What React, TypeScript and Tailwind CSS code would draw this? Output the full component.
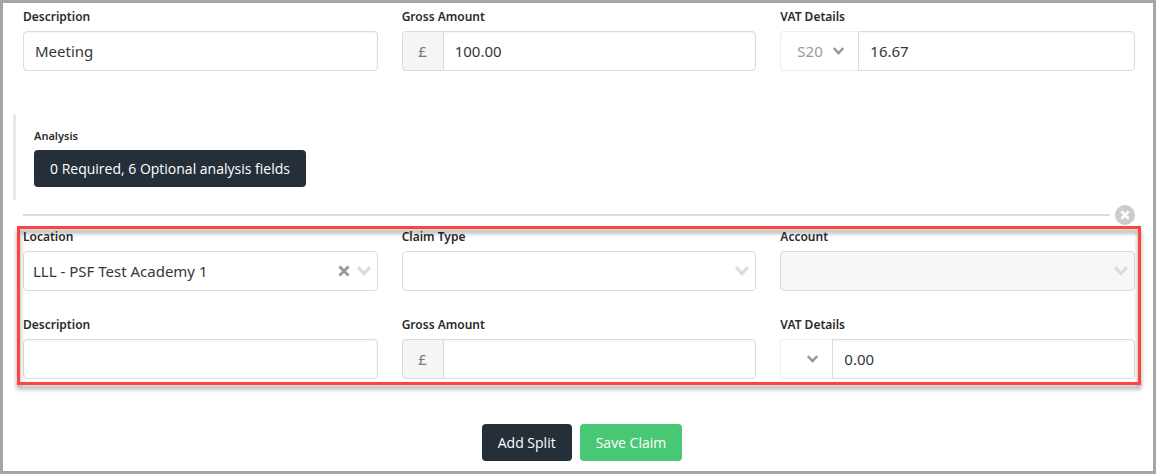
import React from "react";

const ChevronIcon = ({ className }: { className: string }) => (
  <svg
    xmlns="http://www.w3.org/2000/svg"
    viewBox="0 0 14 10"
    fill="none"
    stroke="currentColor"
    strokeWidth="3.2"
    className={className}
  >
    <path d="M1.100 1.200 7 7.600l5.900-6.400"></path>
  </svg>
);
const CrossIcon = ({ className }: { className: string }) => (
  <svg
    xmlns="http://www.w3.org/2000/svg"
    viewBox="0 0 12 12"
    fill="none"
    stroke="currentColor"
    strokeWidth="3"
    className={className}
  >
    <path d="m1.500 1.500 9 9"></path>
    <path d="m10.500 1.500-9 9"></path>
  </svg>
);

const labelClass = "mb-[5px] block text-xs leading-[18px] font-semibold text-[#2b2b2b]";

const controlClass =
  "h-10 w-full min-w-0 border border-[#dbdbdb] bg-white text-[15px] text-[#363636] outline-none";

const insetClass = "px-[11px] shadow-[inset_0_1px_2px_rgba(10,10,10,0.05)]";

type FieldProps = {
  id: string;
  label: string;
  children: React.ReactNode;
};

const Field = ({ id, label, children }: FieldProps) => (
  <div className="min-w-0">
    <label htmlFor={id} className={labelClass}>
      {label}
    </label>
    {children}
  </div>
);

type SelectFieldProps = {
  id: string;
  label: string;
  value?: string;
  disabled?: boolean;
};

const SelectField = ({ id, label, value = "", disabled }: SelectFieldProps) => (
  <Field id={id} label={label}>
    <div className="relative">
      <select
        id={id}
        defaultValue={value}
        disabled={disabled}
        className={`${controlClass} appearance-none rounded pr-14 pl-[9px] disabled:bg-[#f7f7f7] disabled:opacity-100`}
      >
        <option value={value}>{value}</option>
      </select>
      {value && (
        <button
          type="button"
          aria-label={`Clear ${label}`}
          className="absolute inset-y-0 right-7 flex items-center"
        >
          <CrossIcon className="size-3 text-[#999]" />
        </button>
      )}
      <ChevronIcon className="pointer-events-none absolute inset-y-0 right-[7px] my-auto h-2.5 w-3.5 text-[#dbdbdb]" />
    </div>
  </Field>
);

type AmountRowProps = {
  prefix: string;
  description?: string;
  gross?: string;
  vatCode?: string;
  vat: string;
};

const AmountRow = ({ prefix, description, gross, vatCode, vat }: AmountRowProps) => (
  <>
    <Field id={`${prefix}-description`} label="Description">
      <input
        id={`${prefix}-description`}
        type="text"
        defaultValue={description}
        className={`${controlClass} ${insetClass} rounded`}
      />
    </Field>
    <Field id={`${prefix}-gross`} label="Gross Amount">
      <div className="flex">
        <span className="flex h-10 w-[41px] shrink-0 items-center justify-center rounded-l border border-r-0 border-[#dbdbdb] bg-[#f5f5f5] text-[15px] text-[#7a7a7a]">
          £
        </span>
        <input
          id={`${prefix}-gross`}
          type="text"
          defaultValue={gross}
          className={`${controlClass} ${insetClass} rounded-r`}
        />
      </div>
    </Field>
    <Field id={`${prefix}-vat`} label="VAT Details">
      <div className="flex">
        <div className="relative shrink-0">
          <select
            aria-label="VAT code"
            defaultValue={vatCode}
            disabled
            className={`${vatCode ? "w-[78px]" : "w-[52px]"} h-10 appearance-none rounded-l border border-r-0 border-[#ededed] bg-white pl-4 text-[15px] text-[#999] opacity-100`}
          >
            <option value={vatCode}>{vatCode}</option>
          </select>
          <ChevronIcon className="pointer-events-none absolute inset-y-0 right-3.5 my-auto h-2 w-[11px] text-[#999]" />
        </div>
        <input
          id={`${prefix}-vat`}
          type="text"
          defaultValue={vat}
          className={`${controlClass} ${insetClass} rounded-r`}
        />
      </div>
    </Field>
  </>
);

const gridClass = "grid grid-cols-3 gap-x-6 gap-y-[25px]";

const buttonClass = "h-[37px] rounded px-4 font-['Open_Sans',sans-serif] text-sm text-white";

export default function App() {
  return (
    <main className="min-h-screen border-3 border-[#a5a5a5] bg-white pt-[5px] pr-[18px] pb-2.5 pl-5 font-['Noto_Sans','Open_Sans',sans-serif]">
      <form onSubmit={(e) => e.preventDefault()}>
        <div className={gridClass}>
          <AmountRow
            prefix="first"
            description="Meeting"
            gross="100.00"
            vatCode="S20"
            vat="16.67"
          />
        </div>

        <section className="mt-[43px] -ml-2.5 border-l-3 border-[#e8e8ee] py-[13px] pl-[18px]">
          <h2 className="mb-[5px] text-[11px] leading-[18px] font-semibold text-[#2b2b2b]">
            Analysis
          </h2>
          <button type="button" className={`${buttonClass} bg-[#242f3a]`}>
            0 Required, 6 Optional analysis fields
          </button>
        </section>

        <div className="mt-[5px] flex h-5 items-center gap-[5px]">
          <hr className="flex-1 border-0 border-t-2 border-[#dbdbdb]" />
          <button
            type="button"
            aria-label="Remove split"
            className="flex size-5 items-center justify-center rounded-full bg-[#ccc] text-white"
          >
            <CrossIcon className="size-2.5" />
          </button>
        </div>

        <div className="relative mt-[3px]">
          <div className={gridClass}>
            <SelectField id="location" label="Location" value="LLL - PSF Test Academy 1" />
            <SelectField id="claim-type" label="Claim Type" />
            <SelectField id="account" label="Account" disabled />
            <AmountRow prefix="second" vat="0.00" />
          </div>
          {/* highlight around the new split */}
          <div className="pointer-events-none absolute -inset-x-1.5 -top-0.5 -bottom-1.5 border-3 border-[#ff4343] drop-shadow-[0_4px_2px_rgba(0,0,0,0.4)]" />
        </div>

        <div className="mt-[45px] flex justify-center gap-2 pl-1.5">
          <button type="button" className={`${buttonClass} bg-[#242f3a]`}>
            Add Split
          </button>
          <button type="submit" className={`${buttonClass} bg-[#48c774]`}>
            Save Claim
          </button>
        </div>
      </form>
    </main>
  );
}
